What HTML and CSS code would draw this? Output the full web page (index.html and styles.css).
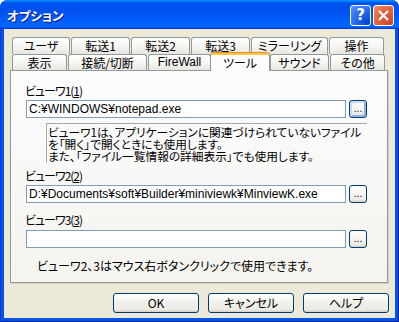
FILE: index.html
```html
<!DOCTYPE html>
<html lang="ja">
<head>
  <meta charset="UTF-8">
  <title>オプション</title>
  <link rel="stylesheet" href="styles.css">
</head>
<body>
<div class="window">
  <header class="titlebar">
    <span class="title">オプション</span>
    <div class="title-buttons">
      <button class="tb tb-help">?</button>
      <button class="tb tb-close">
        <svg width="11" height="11" viewBox="0 0 11 11"><path d="M1 1 L10 10 M10 1 L1 10" stroke="#fff" stroke-width="2.2"/></svg>
      </button>
    </div>
  </header>
  <div class="client">
    <div class="tabs">
      <div class="tab-row row1">
        <div class="tab">ユーザ</div>
        <div class="tab">転送1</div>
        <div class="tab">転送2</div>
        <div class="tab">転送3</div>
        <div class="tab">ミラーリング</div>
        <div class="tab">操作</div>
      </div>
      <div class="tab-row row2">
        <div class="tab">表示</div>
        <div class="tab">接続/切断</div>
        <div class="tab latin">FireWall</div>
        <div class="tab active">ツール</div>
        <div class="tab">サウンド</div>
        <div class="tab">その他</div>
      </div>
    </div>
    <div class="panel">
      <label class="lbl lbl1">ビューワ1(<u>1</u>)</label>
      <div class="path-row">
        <div class="input">C:¥WINDOWS¥notepad.exe</div>
        <button class="browse focused"><span>...</span></button>
      </div>
      <div class="desc">
        ビューワ1は、アプリケーションに関連づけられていないファイル<br>
        を「開く」で開くときにも使用します。<br>
        また、「ファイル一覧情報の詳細表示」でも使用します。
      </div>
      <label class="lbl lbl2">ビューワ2(<u>2</u>)</label>
      <div class="path-row">
        <div class="input">D:¥Documents¥soft¥Builder¥miniviewk¥MinviewK.exe</div>
        <button class="browse"><span>...</span></button>
      </div>
      <label class="lbl lbl3">ビューワ3(<u>3</u>)</label>
      <div class="path-row">
        <div class="input"></div>
        <button class="browse"><span>...</span></button>
      </div>
      <p class="note">ビューワ2、3はマウス右ボタンクリックで使用できます。</p>
    </div>
    <div class="actions">
      <button class="btn">OK</button>
      <button class="btn">キャンセル</button>
      <button class="btn">ヘルプ</button>
    </div>
  </div>
</div>
</body>
</html>
```

FILE: styles.css
```css
body {
  margin: 0;
  font-family: "Noto Sans CJK JP", "Liberation Sans", sans-serif;
  font-size: 12px;
  font-feature-settings: "palt";
  color: #000;
  background: #fff;
}
.window {
  width: 399px;
  height: 322px;
  box-sizing: border-box;
  background: #0055e5;
  border-radius: 8px 8px 0 0;
  box-shadow: inset 1px 0 #0831d9, inset -1px 0 #001ea0, inset 0 -1px #001ea0;
  display: flex;
  flex-direction: column;
}
.titlebar {
  height: 29px;
  flex: none;
  display: flex;
  align-items: center;
  justify-content: space-between;
  padding: 0 5px 0 7px;
  border-radius: 8px 8px 0 0;
  background: linear-gradient(180deg, #0997ff, #0053ee 10%, #0050ee 40%, #0066ff 86%, #0066ff 92%, #005bff 94%, #003dd7 97%, #003dd7);
}
.title {
  color: #fff;
  font-weight: bold;
  font-size: 12.5px;
  text-shadow: 1px 1px #0f1089;
  margin-top: 1px;
}
.title-buttons {
  display: flex;
  gap: 2px;
  margin-top: 1px;
}
.tb {
  width: 21px;
  height: 21px;
  padding: 0;
  border: 1px solid #fff;
  border-radius: 3px;
  display: flex;
  align-items: center;
  justify-content: center;
  color: #fff;
  font: bold 15px "DejaVu Sans", sans-serif;
}
.tb-help {
  background: radial-gradient(circle at 90% 90%, #0043cf, #2a6cf0 55%, #5b97ff);
}
.tb-close {
  background: radial-gradient(circle at 90% 90%, #cc4628, #e2603e 55%, #f08f6e);
}
.client {
  flex: 1;
  margin: 0 4px 4px;
  background: #ece9d8;
  display: flex;
  flex-direction: column;
}
.tabs {
  padding: 8px 0 0 8px;
}
.tab-row {
  display: grid;
  gap: 1px;
}
.row1 {
  grid-template-columns: 58px 59px 59px 59px 77px 55px;
  height: 17px;
}
.row2 {
  grid-template-columns: 55px 79px 63px 57px 59px 55px;
  height: 16px;
}
.tab {
  border: 1px solid #919b9c;
  border-bottom: none;
  border-radius: 3px 3px 0 0;
  background: linear-gradient(180deg, #ffffff, #f3f3ef 60%, #e8e7e1);
  text-align: center;
  line-height: 15px;
  white-space: nowrap;
}
.tab.latin {
  font-family: "Liberation Sans", sans-serif;
}
.tab.active {
  margin: -2px -1px -1px -2px;
  border-top: 1px solid #e68b2c;
  box-shadow: inset 0 2px #ffc73c;
  background: #fcfcfe;
  padding-top: 2px;
  line-height: 15px;
  z-index: 1;
}
.panel {
  margin: 0 7px 0 6px;
  height: 213px;
  box-sizing: border-box;
  border: 1px solid #919b9c;
  box-shadow: 1px 1px 0 #d0cebf;
  background: linear-gradient(180deg, #fcfcfe, #f4f3ee);
  padding: 13px 20px 0 15px;
}
.lbl {
  display: block;
  line-height: 14px;
  margin-left: -1px;
  letter-spacing: -1px;
}
.path-row {
  display: flex;
  gap: 3px;
  margin-top: 2px;
}
.input {
  width: 321px;
  height: 18px;
  box-sizing: border-box;
  border: 1px solid #7f9db9;
  background: #fff;
  padding: 0 2px;
  font-family: "Liberation Sans", "Noto Sans CJK JP", sans-serif;
  line-height: 16px;
  white-space: nowrap;
  overflow: hidden;
}
.browse {
  width: 18px;
  height: 18px;
  padding: 0;
  border: 1px solid #003c74;
  border-radius: 3px;
  background: linear-gradient(180deg, #ffffff, #ecebe6 86%, #d6d0c5);
  font: 10px "Liberation Sans", sans-serif;
  line-height: 10px;
  display: flex;
  align-items: flex-end;
  justify-content: center;
  padding-bottom: 3px;
}
.browse.focused {
  box-shadow: inset 1px 1px #cee7ff, inset -1px -1px #98b8ea, inset 2px 2px #bcd4f6, inset -2px -2px #89ade4;
}
.desc {
  margin: 5px 0 0 20px;
  height: 40px;
  box-sizing: border-box;
  border-top: 1px solid #aca899;
  border-left: 1px solid #aca899;
  padding: 2px 0 0 1px;
  font-size: 11.7px;
  line-height: 12px;
  white-space: nowrap;
}
.lbl2 {
  margin-top: 6px;
}
.lbl3 {
  margin-top: 10px;
}
.lbl3 + .path-row {
  margin-top: 3px;
}
.note {
  margin: 11px 0 0 11px;
  line-height: 14px;
}
.actions {
  display: flex;
  justify-content: flex-end;
  gap: 9px;
  margin-top: 10px;
  padding-right: 6px;
}
.btn {
  width: 86px;
  height: 20px;
  padding: 0;
  border: 1px solid #003c74;
  border-radius: 3px;
  background: linear-gradient(180deg, #ffffff, #f0f0ea 50%, #ecebe6 86%, #d6d0c5);
  font: 12px "Noto Sans CJK JP", sans-serif;
  font-feature-settings: "palt";
  line-height: 16px;
  color: #000;
}
```
